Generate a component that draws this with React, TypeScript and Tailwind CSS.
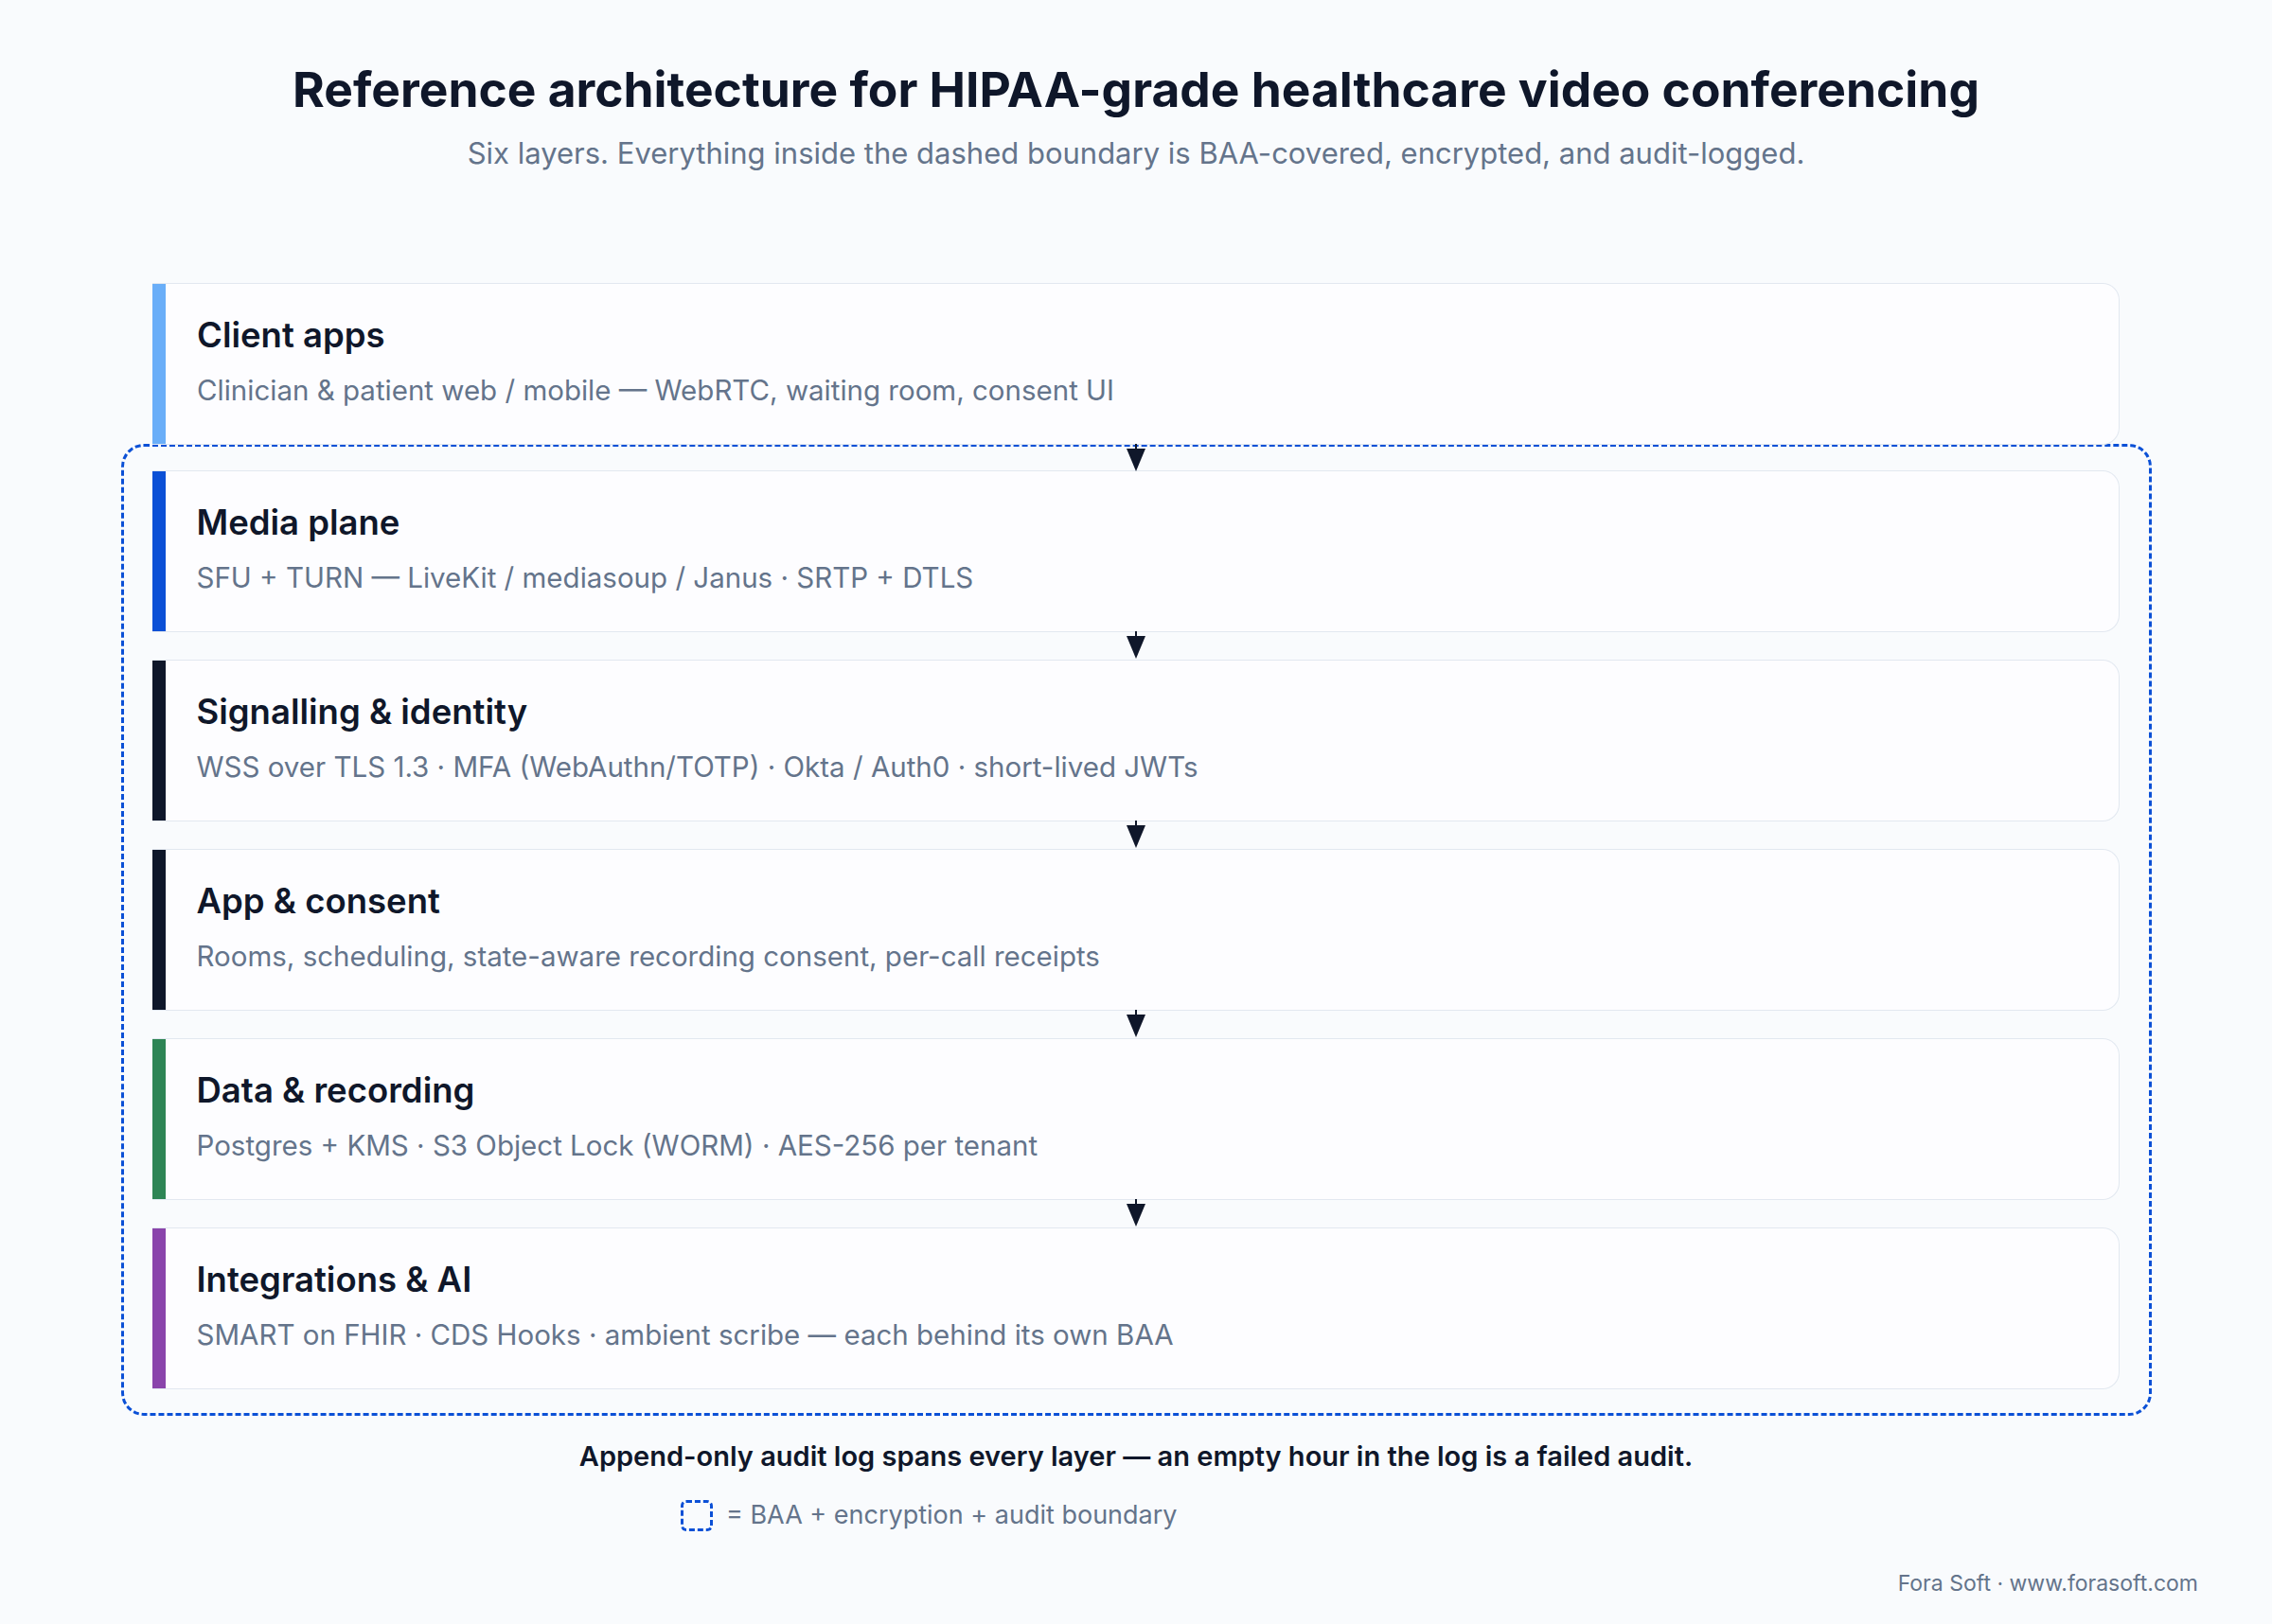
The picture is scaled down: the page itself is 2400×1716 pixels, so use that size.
import React from "react";

const layers = [
  { t: "Client apps", d: "Clinician & patient web / mobile — WebRTC, waiting room, consent UI", c: "bg-[#6aaef8]" },
  { t: "Media plane", d: "SFU + TURN — LiveKit / mediasoup / Janus · SRTP + DTLS", c: "bg-[#0b50d6]" },
  { t: "Signalling & identity", d: "WSS over TLS 1.3 · MFA (WebAuthn/TOTP) · Okta / Auth0 · short-lived JWTs", c: "bg-[#0f172a]" },
  { t: "App & consent", d: "Rooms, scheduling, state-aware recording consent, per-call receipts", c: "bg-[#0f172a]" },
  { t: "Data & recording", d: "Postgres + KMS · S3 Object Lock (WORM) · AES-256 per tenant", c: "bg-[#2e8555]" },
  { t: "Integrations & AI", d: "SMART on FHIR · CDS Hooks · ambient scribe — each behind its own BAA", c: "bg-[#8a44ab]" },
];

function Arrow() {
  return (
    <svg className="absolute left-[1027px] -bottom-[29px] z-10" width="24" height="29" viewBox="0 0 24 29">
      <line x1="12" y1="0" x2="12" y2="8" stroke="#0f172a" strokeWidth="2" />
      <polygon points="2,5 22,5 12,29" fill="#0f172a" />
    </svg>
  );
}

function Card({ l, arrow }: { l: (typeof layers)[0]; arrow: boolean }) {
  return (
    <div className="relative flex h-[171px] w-[2078px] rounded-r-[18px] border border-l-0 border-[#e2e8f0] bg-[#fdfdff]">
      <div className={`w-[14px] shrink-0 ${l.c}`} />
      <div className="flex flex-col pl-[33px] pt-[30px]">
        <div className="text-[36.5px] font-semibold leading-[48px] text-[#0f172a]">{l.t}</div>
        <div className="mt-[14px] text-[29.5px] leading-[40px] text-[#64748b]">{l.d}</div>
      </div>
      {arrow && <Arrow />}
    </div>
  );
}

export default function App() {
  return (
    <div className="flex min-h-[1716px] w-[2400px] flex-col items-center bg-[#f9fbfd] font-[Inter,sans-serif]">
      <h1 className="mt-[62px] text-[51.5px] font-bold leading-[64px] text-[#0f172a]">
        Reference architecture for HIPAA-grade healthcare video conferencing
      </h1>
      <p className="mt-[16px] text-[31px] leading-[40px] text-[#64748b]">
        Six layers. Everything inside the dashed boundary is BAA-covered, encrypted, and audit-logged.
      </p>
      <div className="mt-[117px] flex flex-col items-center">
        <Card l={layers[0]} arrow />
        <div className="flex w-[2145px] flex-col gap-[29px] rounded-[24px] border-[3px] border-dashed border-[#0b50d6] pb-[25px] pt-[25px] pl-[30px] -mt-[1px]">
          {layers.slice(1).map((l, i) => (
            <Card key={l.t} l={l} arrow={i < 4} />
          ))}
        </div>
      </div>
      <div className="mt-[25px] text-[29px] font-semibold leading-[36px] text-[#0f172a]">
        Append-only audit log spans every layer — an empty hour in the log is a failed audit.
      </div>
      <div className="mt-[24px] flex w-[2400px] items-center pl-[719px]">
        <div className="h-[33px] w-[34px] rounded-[6px] border-[3px] border-dashed border-[#0b50d6]" />
        <span className="ml-[14px] text-[27px] text-[#64748b]">= BAA + encryption + audit boundary</span>
      </div>
      <div className="mt-[34px] flex w-[2400px] justify-end pr-[78px] text-[23px] text-[#64748b]">
        Fora Soft · www.forasoft.com
      </div>
    </div>
  );
}
